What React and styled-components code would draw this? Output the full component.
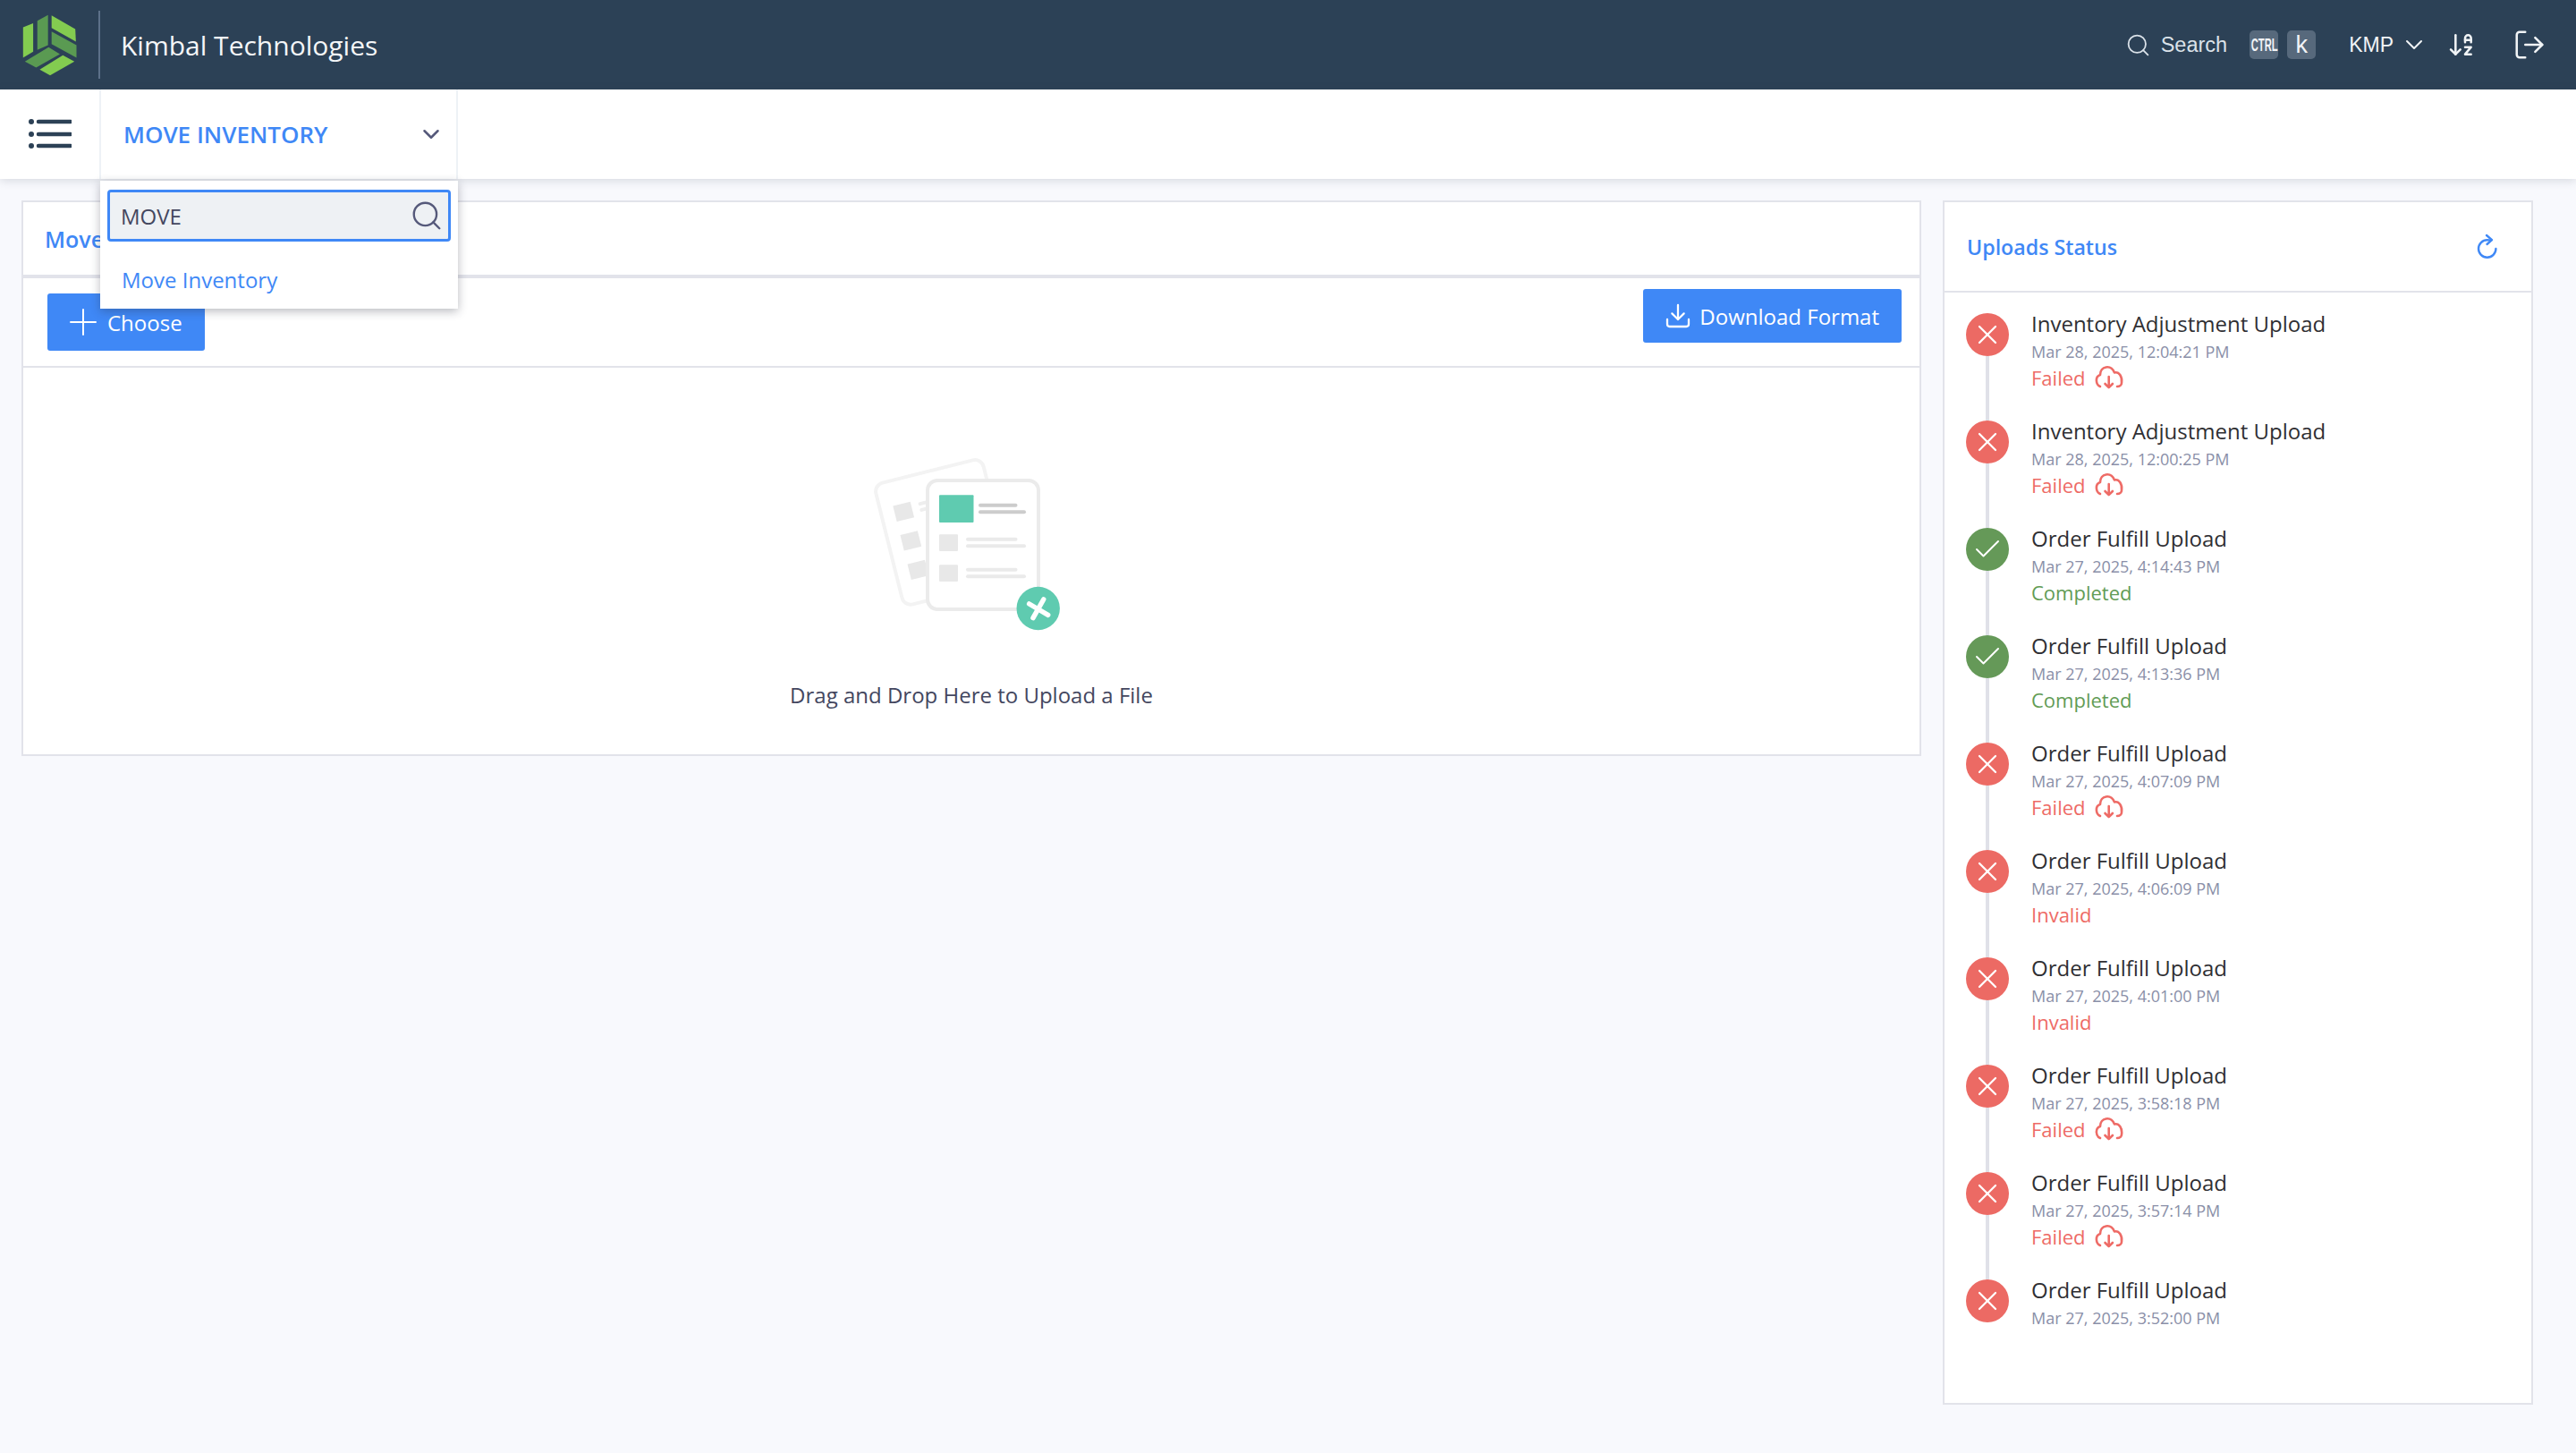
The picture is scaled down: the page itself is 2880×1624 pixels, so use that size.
import React from "react";
import styled, { createGlobalStyle } from "styled-components";
import { Search, ChevronDown, ArrowDownAZ, LogOut, Plus, Download, X, Check } from "lucide-react";

const Global = createGlobalStyle`
  html, body { margin: 0; padding: 0; background: #f8f9fd; }
  * { box-sizing: border-box; }
  body { font-family: "Open Sans", "Noto Sans", sans-serif; }
`;

const Page = styled.div`
  width: 2880px;
  height: 1624px;
  overflow: hidden;
  background: #f8f9fd;
  display: flex;
  flex-direction: column;
`;

const Header = styled.header`
  height: 100px;
  flex: none;
  background: #2c4156;
  color: #fff;
  display: flex;
  align-items: center;
  padding: 0 33px 0 25px;
`;
const LogoBox = styled.div`
  width: 85px;
  display: flex;
  align-items: center;
`;
const HeaderDivider = styled.div`
  width: 2px;
  height: 76px;
  background: #5d7189;
`;
const BrandName = styled.div`
  margin-left: 23px;
  font-size: 30px;
  color: #f4f6f8;
  flex: 1;
`;
const HeaderTools = styled.div`
  display: flex;
  align-items: center;
  font-family: "Liberation Sans", Arial, sans-serif;
`;
const SearchHint = styled.div`
  display: flex;
  align-items: center;
  gap: 11px;
  font-size: 23.5px;
  color: #dbe2e9;
  margin-right: 25px;
`;
const Keys = styled.div`
  display: flex;
  gap: 10px;
  margin-right: 37px;
`;
const Key = styled.div`
  width: 32px;
  height: 32px;
  border-radius: 5px;
  background: #57697c;
  display: flex;
  align-items: center;
  justify-content: center;
  color: #f2f4f7;
  font-size: ${(p) => (p.$small ? 20 : 27)}px;
  font-weight: ${(p) => (p.$small ? 700 : 400)};
  overflow: hidden;
`;
const Squeezed = styled.span`
  display: inline-block;
  flex: none;
  transform: scaleX(0.56);
`;
const Company = styled.div`
  display: flex;
  align-items: center;
  gap: 7px;
  font-size: 23px;
  color: #f1f4f6;
  margin-right: 21px;
`;
const ToolIcon = styled.div`
  display: flex;
  margin-right: ${(p) => p.$gap || 0}px;
  color: #f1f4f6;
`;

const SubBar = styled.div`
  height: 100px;
  flex: none;
  background: #fff;
  box-shadow: 0 2px 10px rgba(60, 70, 90, 0.18);
  display: flex;
  position: relative;
  z-index: 2;
`;
const MenuButton = styled.div`
  width: 111px;
  display: flex;
  align-items: center;
  padding-left: 30px;
`;
const ModuleSelect = styled.div`
  width: 401px;
  border-left: 2px solid #eef2f6;
  border-right: 2px solid #eef2f6;
  display: flex;
  align-items: center;
  justify-content: space-between;
  padding: 0 13px 0 25px;
  position: relative;
`;
const ModuleName = styled.div`
  font-size: 26px;
  font-weight: 600;
  color: #3f88f6;
`;
const Dropdown = styled.div`
  position: absolute;
  left: -1px;
  top: 102px;
  width: 400px;
  height: 143px;
  background: #fff;
  box-shadow: 0 3px 10px rgba(40, 45, 60, 0.32);
  padding: 10px 8px;
`;
const SearchField = styled.div`
  height: 58px;
  background: #eef1f4;
  border: 3px solid #3f88f6;
  border-radius: 4px;
  display: flex;
  align-items: center;
  justify-content: space-between;
  padding: 0 5px 0 12px;
  font-size: 24px;
  color: #44475f;
`;
const DropdownItem = styled.div`
  margin: 26px 0 0 16px;
  font-size: 24px;
  color: #3f88f6;
`;

const Content = styled.main`
  flex: 1;
  display: flex;
  align-items: flex-start;
  gap: 24px;
  padding: 24px 48px 0 24px;
`;
const Panel = styled.section`
  background: #fff;
  border: 2px solid #e2e3ea;
`;
const UploadPanel = styled(Panel)`
  flex: 1;
  height: 621px;
  display: flex;
  flex-direction: column;
`;
const TabRow = styled.div`
  height: 85px;
  flex: none;
  display: flex;
  align-items: center;
  padding: 0 0 0 24px;
  border-bottom: 4px solid #e2e3ea;
`;
const TabTitle = styled.div`
  font-size: 25px;
  font-weight: 600;
  color: #3f88f6;
`;
const ActionRow = styled.div`
  height: 100px;
  flex: none;
  display: flex;
  align-items: flex-start;
  justify-content: space-between;
  padding: 0 20px 0 27px;
  border-bottom: 2px solid #e2e3ea;
`;
const PrimaryButton = styled.div`
  background: #3f88f6;
  color: #fff;
  border-radius: 3px;
  display: flex;
  align-items: center;
  gap: ${(p) => p.$gap}px;
  height: ${(p) => p.$h}px;
  padding: 0 ${(p) => p.$pr}px 0 ${(p) => p.$pl}px;
  font-size: 24px;
  margin-top: ${(p) => p.$mt}px;
`;
const DropArea = styled.div`
  flex: 1;
  display: flex;
  flex-direction: column;
  align-items: center;
`;
const Illustration = styled.svg`
  display: block;
  margin-top: 94px;
`;
const DropText = styled.div`
  margin-top: 50px;
  font-size: 24px;
  color: #44475f;
`;

const StatusPanel = styled(Panel)`
  width: 660px;
  flex: none;
  height: 1346px;
`;
const StatusHeader = styled.div`
  height: 101px;
  display: flex;
  align-items: center;
  justify-content: space-between;
  padding: 1px 28px 0 25px;
  border-bottom: 2px solid #e2e3ea;
`;
const StatusTitle = styled.div`
  font-size: 23.2px;
  font-weight: 600;
  color: #3f88f6;
`;
const StatusList = styled.div`
  padding: 23px 24px 0 24px;
`;
const StatusItem = styled.div`
  height: 120px;
  display: flex;
  gap: 25px;
`;
const Rail = styled.div`
  width: 48px;
  flex: none;
  display: flex;
  flex-direction: column;
  align-items: center;
`;
const Badge = styled.div`
  width: 48px;
  height: 48px;
  flex: none;
  border-radius: 50%;
  background: ${(p) => (p.$ok ? "#659958" : "#ec6a64")};
  color: #fff;
  display: flex;
  align-items: center;
  justify-content: center;
`;
const RailLine = styled.div`
  width: 4px;
  flex: 1;
  background: #e0e1e8;
`;
const ItemBody = styled.div`
  display: flex;
  flex-direction: column;
`;
const ItemTitle = styled.div`
  font-size: 24px;
  line-height: 24px;
  color: #2f2f33;
`;
const ItemDate = styled.div`
  font-size: 18px;
  line-height: 30px;
  margin-top: 4px;
  color: #8a8fa8;
`;
const ItemState = styled.div`
  display: flex;
  align-items: center;
  gap: 4px;
  font-size: 22px;
  line-height: 30px;
  margin-top: -1px;
  color: ${(p) => (p.$ok ? "#629c55" : "#ee6b66")};
`;
const CloudIcon = styled.svg`
  display: block;
  margin: -3px 0;
`;

const items = [
  ["Inventory Adjustment Upload", "Mar 28, 2025, 12:04:21 PM", "Failed"],
  ["Inventory Adjustment Upload", "Mar 28, 2025, 12:00:25 PM", "Failed"],
  ["Order Fulfill Upload", "Mar 27, 2025, 4:14:43 PM", "Completed"],
  ["Order Fulfill Upload", "Mar 27, 2025, 4:13:36 PM", "Completed"],
  ["Order Fulfill Upload", "Mar 27, 2025, 4:07:09 PM", "Failed"],
  ["Order Fulfill Upload", "Mar 27, 2025, 4:06:09 PM", "Invalid"],
  ["Order Fulfill Upload", "Mar 27, 2025, 4:01:00 PM", "Invalid"],
  ["Order Fulfill Upload", "Mar 27, 2025, 3:58:18 PM", "Failed"],
  ["Order Fulfill Upload", "Mar 27, 2025, 3:57:14 PM", "Failed"],
  ["Order Fulfill Upload", "Mar 27, 2025, 3:52:00 PM", ""],
];

const Logo = () => (
  <svg width="62" height="69" viewBox="72 46 186 208">
    <polygon points="74,90 108,76 108,172 74,192" fill="#83cc50" />
    <polygon points="122,68 158,48 158,150 122,166" fill="#5a9a52" />
    <polygon points="170,50 250,96 252,138 170,92" fill="#83cc50" />
    <polygon points="170,104 254,150 254,192 170,146" fill="#5a9a52" />
    <polygon points="80,205 160,157 198,180 118,225" fill="#5a9a52" />
    <polygon points="130,232 208,184 247,205 165,252" fill="#83cc50" />
  </svg>
);

const Hamburger = () => (
  <svg width="50" height="36" viewBox="0 0 50 36">
    <g fill="#2c4156">
      <circle cx="5" cy="4" r="3" />
      <circle cx="5" cy="18" r="3" />
      <circle cx="5" cy="31" r="3" />
    </g>
    <g stroke="#2c4156" strokeWidth="4.5" strokeLinecap="round">
      <path d="M13 4H49" />
      <path d="M13 18H49" />
      <path d="M13 31H49" />
    </g>
  </svg>
);

const Refresh = () => (
  <svg width="42" height="44" viewBox="0 0 42 44" fill="none" stroke="#3f88f6" strokeWidth="2.4" strokeLinecap="round" strokeLinejoin="round">
    <path d="M25 14.6C23.8 14.3 22.3 14.3 20.7 14.3A9.7 9.7 0 1 0 30.4 24" />
    <path d="M20 9L26 14.2L20.5 19" />
  </svg>
);

const Cloud = () => (
  <CloudIcon width="46" height="36" viewBox="0 0 46 36" fill="none" stroke="#ee6b66" strokeWidth="2.6" strokeLinecap="round" strokeLinejoin="round">
    <path d="M12 28C7 26 6 17 12 15C12 5 24 3 28 12.5C33 11 37 17 36 24C36 26 34 28 31 28" />
    <path d="M21.7 17V29M17.5 25L21.7 29.2L25.9 25" />
  </CloudIcon>
);

const Doc = () => (
  <Illustration width="220" height="205" viewBox="76 25 220 205">
    <g transform="rotate(-14 77 62)">
      <rect x="77" y="62" width="124" height="140" rx="10" fill="#fff" stroke="#f3f3f3" strokeWidth="4" />
      <rect x="92" y="90" width="20" height="18" fill="#e8e8e8" />
      <rect x="92" y="123.5" width="20" height="18" fill="#e8e8e8" />
      <rect x="92" y="157" width="20" height="18" fill="#e8e8e8" />
      <rect x="120" y="93" width="40" height="4" rx="2" fill="#eeeeee" />
      <rect x="120" y="100" width="40" height="4" rx="2" fill="#eeeeee" />
    </g>
    <rect x="137" y="57" width="124" height="144" rx="11" fill="#fff" stroke="#ebebeb" strokeWidth="4" />
    <rect x="150" y="73.3" width="38.5" height="30.7" rx="1" fill="#5fcbb0" />
    <rect x="194" y="82.7" width="43.5" height="4" rx="2" fill="#cccccc" />
    <rect x="194" y="90.3" width="53" height="4" rx="2" fill="#cccccc" />
    <rect x="150" y="117.3" width="21" height="18.7" rx="1" fill="#e8e8e8" />
    <rect x="180" y="120.7" width="57.5" height="4" rx="2" fill="#eaeaea" />
    <rect x="180" y="128.3" width="67" height="4" rx="2" fill="#eaeaea" />
    <rect x="150" y="151.3" width="21" height="18.7" rx="1" fill="#e8e8e8" />
    <rect x="180" y="154.7" width="57.5" height="4" rx="2" fill="#eaeaea" />
    <rect x="180" y="162.3" width="67" height="4" rx="2" fill="#eaeaea" />
    <circle cx="260.7" cy="200" r="24.2" fill="#5fcbb0" />
    <g stroke="#fff" strokeWidth="5.5" strokeLinecap="round">
      <path d="M250.7 195L271.7 207.3" />
      <path d="M255 210.7L266.7 190" />
    </g>
  </Illustration>
);

export default function App() {
  return (
    <Page>
      <Global />
      <Header>
        <LogoBox><Logo /></LogoBox>
        <HeaderDivider />
        <BrandName>Kimbal Technologies</BrandName>
        <HeaderTools>
          <SearchHint><Search size={29} strokeWidth={1.5} />Search</SearchHint>
          <Keys>
            <Key $small><Squeezed>CTRL</Squeezed></Key>
            <Key>k</Key>
          </Keys>
          <Company>KMP <ChevronDown size={32} strokeWidth={1.5} /></Company>
          <ToolIcon $gap={41}><ArrowDownAZ size={32} strokeWidth={1.9} /></ToolIcon>
          <ToolIcon><LogOut size={38} strokeWidth={1.6} /></ToolIcon>
        </HeaderTools>
      </Header>
      <SubBar>
        <MenuButton><Hamburger /></MenuButton>
        <ModuleSelect>
          <ModuleName>MOVE INVENTORY</ModuleName>
          <ChevronDown size={30} color="#55597a" strokeWidth={2} />
          <Dropdown>
            <SearchField>
              MOVE
              <Search size={38} color="#55597a" strokeWidth={1.5} />
            </SearchField>
            <DropdownItem>Move Inventory</DropdownItem>
          </Dropdown>
        </ModuleSelect>
      </SubBar>
      <Content>
        <UploadPanel>
          <TabRow><TabTitle>Move Inventory</TabTitle></TabRow>
          <ActionRow>
            <PrimaryButton $h={64} $pl={16} $pr={25} $gap={3} $mt={17}>
              <Plus size={48} strokeWidth={1} />
              Choose
            </PrimaryButton>
            <PrimaryButton $h={60} $pl={23} $pr={25} $gap={8} $mt={12}>
              <Download size={32} strokeWidth={1.7} />
              Download Format
            </PrimaryButton>
          </ActionRow>
          <DropArea>
            <Doc />
            <DropText>Drag and Drop Here to Upload a File</DropText>
          </DropArea>
        </UploadPanel>
        <StatusPanel>
          <StatusHeader>
            <StatusTitle>Uploads Status</StatusTitle>
            <Refresh />
          </StatusHeader>
          <StatusList>
            {items.map(([title, date, state], i) => {
              const ok = state === "Completed";
              return (
                <StatusItem key={i}>
                  <Rail>
                    <Badge $ok={ok}>
                      {ok ? <Check size={36} strokeWidth={1.3} /> : <X size={36} strokeWidth={1.5} />}
                    </Badge>
                    {i < items.length - 1 && <RailLine />}
                  </Rail>
                  <ItemBody>
                    <ItemTitle>{title}</ItemTitle>
                    <ItemDate>{date}</ItemDate>
                    {state && (
                      <ItemState $ok={ok}>
                        {state}
                        {state === "Failed" && <Cloud />}
                      </ItemState>
                    )}
                  </ItemBody>
                </StatusItem>
              );
            })}
          </StatusList>
        </StatusPanel>
      </Content>
    </Page>
  );
}
